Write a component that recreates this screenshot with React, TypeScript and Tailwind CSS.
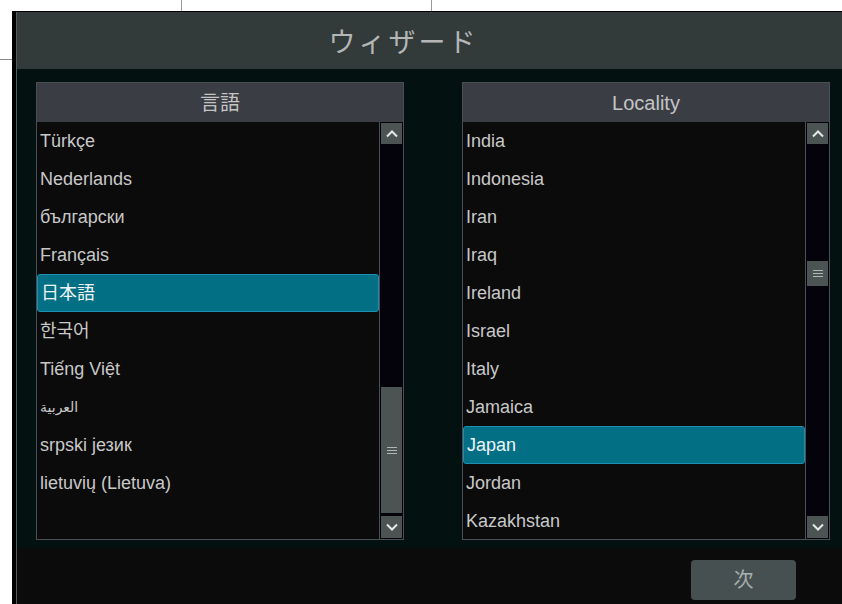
import React from 'react';

type ListPanelProps = {
  title: string;
  items: string[];
  selected: string;
  thumbTop: number;
  thumbHeight: number;
};

const fontLatin = "font-['Liberation_Sans','Noto_Sans_CJK_JP','Noto_Sans_CJK_KR','DejaVu_Sans',sans-serif]";

const Chevron = ({ up }: { up?: boolean }) => (
  <svg width="14" height="10" viewBox="0 0 14 10">
    <polyline
      points={up ? '2,7.5 7,2.5 12,7.5' : '2,2.5 7,7.5 12,2.5'}
      fill="none"
      stroke="#e4e8e8"
      strokeWidth="2"
    />
  </svg>
);

const Grip = () => (
  <div className="flex flex-col gap-[2px]">
    <div className="w-[10px] h-px bg-[#aeb6b6]" />
    <div className="w-[10px] h-px bg-[#aeb6b6]" />
    <div className="w-[10px] h-px bg-[#aeb6b6]" />
  </div>
);

const ListPanel: React.FC<ListPanelProps> = ({ title, items, selected, thumbTop, thumbHeight }) => (
  <div className="w-[368px] h-[458px] border border-[#4b4e54] flex flex-col bg-[#0b0b0b]">
    {/* Header */}
    <div className="h-[39px] shrink-0 bg-[#3b3d45] flex items-center justify-center text-[20px] text-[#c4c4c4]">
      {title}
    </div>

    <div className="flex flex-1 min-h-0">
      {/* Rows */}
      <div className="flex-1 overflow-hidden">
        {items.map((item) => {
          const active = item === selected;
          return (
            <div
              key={item}
              className={
                active
                  ? 'h-[38px] flex items-center pl-[3px] text-[18px] text-[#eef4f6] bg-[#026f84] rounded-[3px] border border-[#1b8fb4]'
                  : 'h-[38px] flex items-center pl-[3px] text-[18px] text-[#c8c8c8]'
              }
            >
              {item === 'العربية' ? <span className="text-[14px]">{item}</span> : item}
            </div>
          );
        })}
      </div>

      {/* Scrollbar */}
      <div className="w-[24px] shrink-0 border-l border-[#4b4e54] bg-[#04030c] p-[1px] flex flex-col">
        <div className="h-[21px] shrink-0 bg-[#4b5353] flex items-center justify-center">
          <Chevron up />
        </div>
        <div className="flex-1 flex flex-col">
          <div className="shrink-0" style={{ height: thumbTop }} />
          <div
            className="shrink-0 bg-[#4b5353] flex items-center justify-center"
            style={{ height: thumbHeight }}
          >
            <Grip />
          </div>
        </div>
        <div className="h-[22px] shrink-0 bg-[#4b5353] flex items-center justify-center">
          <Chevron />
        </div>
      </div>
    </div>
  </div>
);

const languages = [
  'Türkçe',
  'Nederlands',
  'български',
  'Français',
  '日本語',
  '한국어',
  'Tiếng Việt',
  'العربية',
  'srpski језик',
  'lietuvių (Lietuva)',
];

const countries = [
  'India',
  'Indonesia',
  'Iran',
  'Iraq',
  'Ireland',
  'Israel',
  'Italy',
  'Jamaica',
  'Japan',
  'Jordan',
  'Kazakhstan',
];

export default function App() {
  return (
    <div className={`w-[842px] h-[604px] bg-white flex flex-col overflow-hidden ${fontLatin}`}>
      {/* strip above the window */}
      <div className="h-[11px] shrink-0 flex">
        <div className="w-[181px]" />
        <div className="w-px bg-[#9a9a9a]" />
        <div className="w-[249px]" />
        <div className="w-px bg-[#9a9a9a]" />
      </div>

      <div className="flex flex-1 min-h-0">
        <div className="w-[12px] shrink-0 flex flex-col">
          <div className="h-[48px]" />
          <div className="h-px bg-[#8a8a8a]" />
        </div>

        <div className="flex-1 border-l-4 border-t border-black flex flex-col">
          <div className="flex-1 border-l border-[#525a5a] flex flex-col">
            {/* Title */}
            <div className="h-[57px] shrink-0 bg-[#333a3a] flex items-center justify-center text-[27px] tracking-[3px] text-[#b4b6b6] pr-[52px] pt-[6px]">
              ウィザード
            </div>

            {/* Body */}
            <div className="h-[479px] shrink-0 bg-[#031211] pt-[13px] pl-[19px] pr-[12px] flex gap-[58px]">
              <ListPanel title="言語" items={languages} selected="日本語" thumbTop={243} thumbHeight={126} />
              <ListPanel title="Locality" items={countries} selected="Japan" thumbTop={117} thumbHeight={25} />
            </div>

            {/* Footer */}
            <div className="flex-1 bg-[#0b0b0b] flex items-start justify-end pt-[12px] pr-[46px]">
              <button className="w-[105px] h-[40px] rounded-[4px] bg-[#465050] text-[20px] text-[#a8b0b0]">
                次
              </button>
            </div>
          </div>
        </div>
      </div>
    </div>
  );
}
